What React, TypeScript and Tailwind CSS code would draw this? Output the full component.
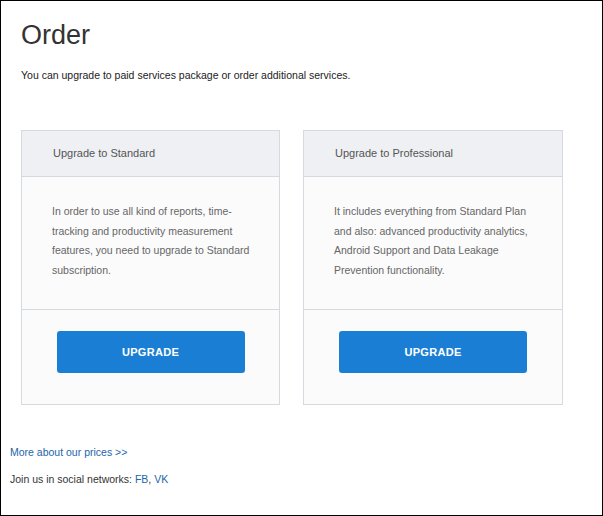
const plans = [
  {
    title: "Upgrade to Standard",
    text: "In order to use all kind of reports, time-tracking and productivity measurement features, you need to upgrade to Standard subscription.",
  },
  {
    title: "Upgrade to Professional",
    text: "It includes everything from Standard Plan and also: advanced productivity analytics, Android Support and Data Leakage Prevention functionality.",
  },
];

export default function App() {
  return (
    <div
      className="h-[516px] w-[603px] overflow-hidden border border-black bg-white text-[#333]"
      style={{ fontFamily: '"Liberation Sans", Arial, sans-serif' }}
    >
      <div className="pl-[20px] pt-[18px]">
        <h1 className="text-[27px] leading-[32px] font-normal text-[#333]">Order</h1>
        <p className="mt-[17px] text-[10.5px] leading-[14px] text-[#222]">
          You can upgrade to paid services package or order additional services.
        </p>
        <div className="mt-[48px] flex gap-[23px]">
          {plans.map((plan, i) => (
            <div
              key={plan.title}
              className={`flex flex-col border border-[#d5dae0] bg-[#fbfbfc] ${i === 0 ? "w-[259px]" : "w-[260px]"}`}
            >
              <div className="flex h-[46px] items-center border-b border-[#d5dae0] bg-[#eef0f3] pl-[31px] text-[11px] text-[#555]">
                {plan.title}
              </div>
              <div className="h-[133px] border-b border-[#d5dae0] pl-[30px] pr-[28px] pt-[25px] text-[10.5px] leading-[19.6px] text-[#666]">
                {plan.text}
              </div>
              <div className="flex justify-center pb-[31px] pt-[21px]">
                <button className="h-[42px] w-[188px] rounded-[3px] bg-[#1a7fd4] text-[11px] font-bold tracking-[0.3px] text-white">
                  UPGRADE
                </button>
              </div>
            </div>
          ))}
        </div>
      </div>
      <div className="pl-[9px] pt-[40px] text-[10.5px]">
        <a href="#" className="text-[#1c66a9]">More about our prices &gt;&gt;</a>
        <p className="mt-[11px] text-[#333]">
          Join us in social networks: <a href="#" className="text-[#1c66a9]">FB</a>,{" "}
          <a href="#" className="text-[#1c66a9]">VK</a>
        </p>
      </div>
    </div>
  );
}
